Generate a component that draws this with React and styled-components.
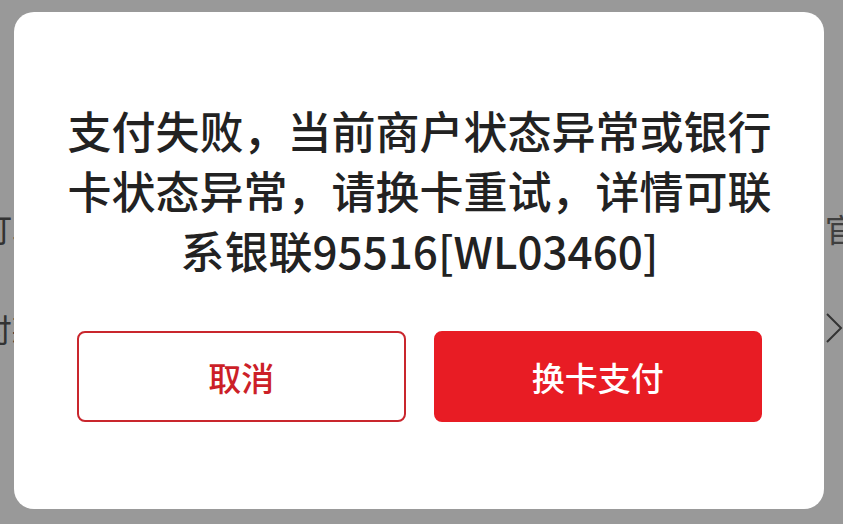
import React from 'react';
import styled, { createGlobalStyle } from 'styled-components';

const GlobalStyle = createGlobalStyle`
  html, body {
    margin: 0;
    padding: 0;
    height: 100%;
    overflow: hidden;
    background: #fff;
    font-family: "Noto Sans CJK SC", "Noto Sans", sans-serif;
  }
`;

const Page = styled.div`
  height: 100vh;
  margin: 0 -50px 0 -20px;
  padding-top: 178px;
  box-sizing: border-box;
  background: #fff;
`;

const Row = styled.div`
  height: 100px;
  display: flex;
  align-items: center;
  justify-content: space-between;
  font-size: 32px;
  color: #555;
`;

const RowSide = styled.div`
  width: 68px;
  display: flex;
  align-items: center;
  white-space: nowrap;
  color: #6a6a6a;
`;

const Overlay = styled.div`
  position: fixed;
  inset: 0;
  background: rgba(0, 0, 0, 0.4);
  display: flex;
  align-items: flex-start;
  padding: 12px 0 0 14px;
`;

const Modal = styled.div`
  width: 810px;
  height: 497px;
  box-sizing: border-box;
  background: #fff;
  border-radius: 20px;
  padding: 88px 62px 0 63px;
  display: flex;
  flex-direction: column;
  align-items: center;
`;

const Message = styled.p`
  margin: 0;
  width: 710px;
  text-align: center;
  font-size: 44px;
  line-height: 60px;
  font-weight: 500;
  color: #222;
`;

const Actions = styled.div`
  width: 100%;
  margin-top: 51px;
  display: flex;
  gap: 28px;
`;

const Button = styled.button`
  flex: 1;
  height: 91px;
  border-radius: 8px;
  font-family: "Noto Sans CJK SC", sans-serif;
  font-size: 33px;
  font-weight: 500;
  cursor: pointer;
  border: 2px solid ${p => (p.$primary ? '#e81c24' : '#c9262d')};
  background: ${p => (p.$primary ? '#e81c24' : '#fff')};
  color: ${p => (p.$primary ? '#fff' : '#cc1f28')};
`;

const Chevron = () => (
  <svg width="18" height="32" viewBox="0 0 18 32" fill="none">
    <path d="M2 2 L16 16 L2 30" stroke="#555" strokeWidth="2" />
  </svg>
);

export default function App() {
  return (
    <>
      <GlobalStyle />
      <Page>
        <Row>
          <span>订单信息</span>
          <RowSide>官方</RowSide>
        </Row>
        <Row>
          <span>付款方式</span>
          <RowSide><Chevron /></RowSide>
        </Row>
      </Page>
      <Overlay>
        <Modal>
          <Message>
            支付失败，当前商户状态异常或银行卡状态异常，请换卡重试，详情可联系银联95516[WL03460]
          </Message>
          <Actions>
            <Button>取消</Button>
            <Button $primary>换卡支付</Button>
          </Actions>
        </Modal>
      </Overlay>
    </>
  );
}
